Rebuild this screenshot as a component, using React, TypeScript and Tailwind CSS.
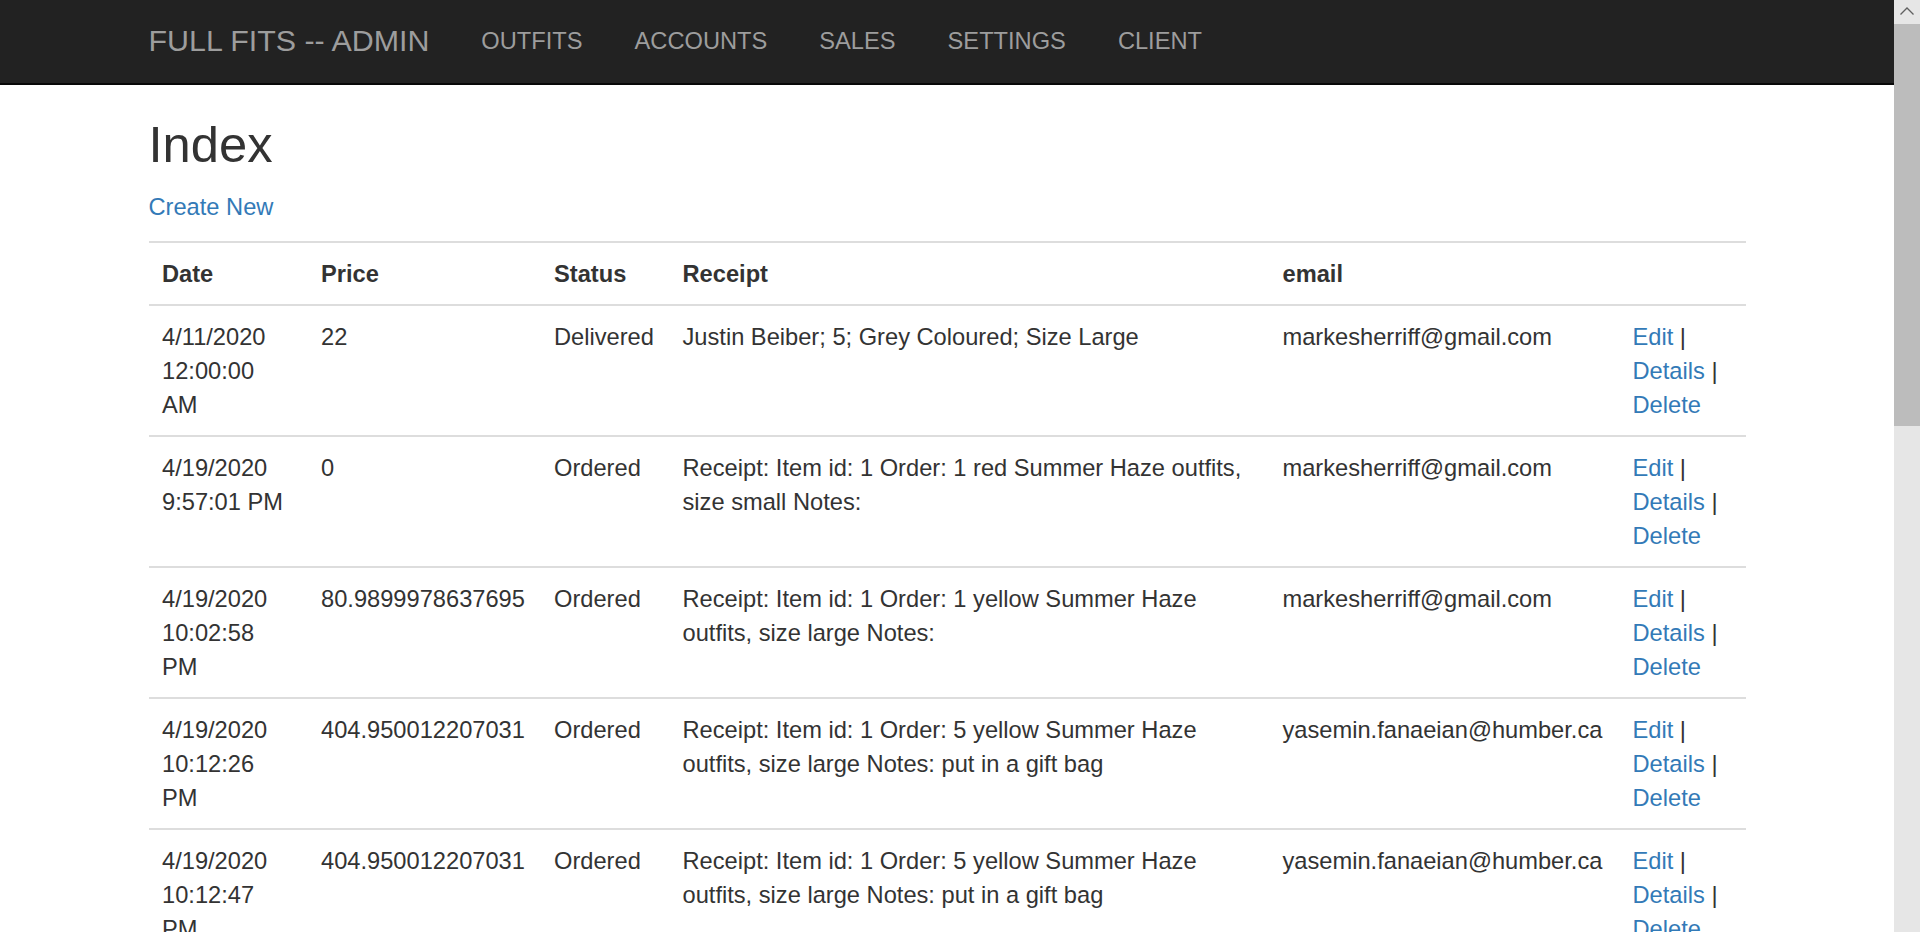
import React from 'react';

type Sale = {
  date: string;
  price: string;
  status: string;
  receipt: string;
  email: string;
};

const sales: Sale[] = [
  {
    date: '4/11/2020 12:00:00 AM',
    price: '22',
    status: 'Delivered',
    receipt: 'Justin Beiber; 5; Grey Coloured; Size Large',
    email: 'markesherriff@gmail.com',
  },
  {
    date: '4/19/2020 9:57:01 PM',
    price: '0',
    status: 'Ordered',
    receipt: 'Receipt: Item id: 1 Order: 1 red Summer Haze outfits, size small Notes:',
    email: 'markesherriff@gmail.com',
  },
  {
    date: '4/19/2020 10:02:58 PM',
    price: '80.9899978637695',
    status: 'Ordered',
    receipt: 'Receipt: Item id: 1 Order: 1 yellow Summer Haze outfits, size large Notes:',
    email: 'markesherriff@gmail.com',
  },
  {
    date: '4/19/2020 10:12:26 PM',
    price: '404.950012207031',
    status: 'Ordered',
    receipt: 'Receipt: Item id: 1 Order: 5 yellow Summer Haze outfits, size large Notes: put in a gift bag',
    email: 'yasemin.fanaeian@humber.ca',
  },
  {
    date: '4/19/2020 10:12:47 PM',
    price: '404.950012207031',
    status: 'Ordered',
    receipt: 'Receipt: Item id: 1 Order: 5 yellow Summer Haze outfits, size large Notes: put in a gift bag',
    email: 'yasemin.fanaeian@humber.ca',
  },
  {
    date: '4/20/2020 11:02:13 AM',
    price: '80.9899978637695',
    status: 'Ordered',
    receipt: 'Receipt: Item id: 1 Order: 1 yellow Summer Haze outfits, size large Notes:',
    email: 'markesherriff@gmail.com',
  },
];

const navLinks = ['OUTFITS', 'ACCOUNTS', 'SALES', 'SETTINGS', 'CLIENT'];

const Navbar: React.FC = () => (
  <div className="bg-[#222222] border-b-2 border-[#080808] shrink-0">
    <div className="w-[1597px] mx-auto h-[83px] flex items-center pb-[2px]">
      <a className="text-[30.4px] text-[#9d9d9d] pr-[26px] leading-[34px] cursor-pointer mt-[-1px]">FULL FITS -- ADMIN</a>
      <ul className="flex items-center">
        {navLinks.map((l) => (
          <li key={l}>
            <a className="block px-[26px] text-[23.66px] leading-[34px] text-[#9d9d9d] cursor-pointer">{l}</a>
          </li>
        ))}
      </ul>
    </div>
  </div>
);

const Scrollbar: React.FC = () => (
  <div className="w-[26px] shrink-0 flex flex-col bg-[#e8e8e8]">
    <div className="h-[24px] flex items-center justify-center bg-[#e6e6e6]">
      <svg width="16" height="10" viewBox="0 0 16 10" className="mt-[-2px]">
        <polyline points="1.5,8.5 8,2 14.5,8.5" fill="none" stroke="#606060" strokeWidth="1.3" />
      </svg>
    </div>
    <div className="h-[402px] bg-[#bcbcbc]" />
    <div className="flex-1 bg-[#e6e6e6]" />
  </div>
);

const cell = 'px-[13.5px] pt-[14.5px] pb-[12.5px] border-t-2 border-[#dddddd] text-left';

const App: React.FC = () => {
  return (
    <div
      className="h-[932px] w-full flex overflow-hidden bg-white text-[#333333] text-[23.66px] leading-[34px]"
      style={{ fontFamily: '"Liberation Sans", Arial, Helvetica, sans-serif' }}
    >
      <div className="flex-1 flex flex-col min-w-0">
        <Navbar />
        <div className="w-[1597px] mx-auto">
          <h2 className="text-[50.7px] leading-[1.1] mt-[32px] mb-[17px] font-normal">Index</h2>
          <p className="mb-[17px]">
            <a className="text-[#337ab7] cursor-pointer">Create New</a>
          </p>
          <table className="w-full table-fixed border-collapse">
            <colgroup>
              <col className="w-[159px]" />
              <col className="w-[233px]" />
              <col className="w-[128.5px]" />
              <col className="w-[600px]" />
              <col className="w-[350px]" />
              <col className="w-[126.5px]" />
            </colgroup>
            <tbody>
              <tr>
                <th className={`${cell} font-bold align-bottom`}>Date</th>
                <th className={`${cell} font-bold align-bottom`}>Price</th>
                <th className={`${cell} font-bold align-bottom`}>Status</th>
                <th className={`${cell} font-bold align-bottom`}>Receipt</th>
                <th className={`${cell} font-bold align-bottom`}>email</th>
                <th className={`${cell} align-bottom`}></th>
              </tr>
              {sales.map((s, i) => (
                <tr key={i}>
                  <td className={`${cell} align-top`}>{s.date}</td>
                  <td className={`${cell} align-top`}>{s.price}</td>
                  <td className={`${cell} align-top`}>{s.status}</td>
                  <td className={`${cell} align-top`}>{s.receipt}</td>
                  <td className={`${cell} align-top`}>{s.email}</td>
                  <td className={`${cell} align-top`}>
                    <a className="text-[#337ab7] cursor-pointer">Edit</a> |{' '}
                    <a className="text-[#337ab7] cursor-pointer">Details</a> |{' '}
                    <a className="text-[#337ab7] cursor-pointer">Delete</a>
                  </td>
                </tr>
              ))}
            </tbody>
          </table>
        </div>
      </div>
      <Scrollbar />
    </div>
  );
};

export default App;
